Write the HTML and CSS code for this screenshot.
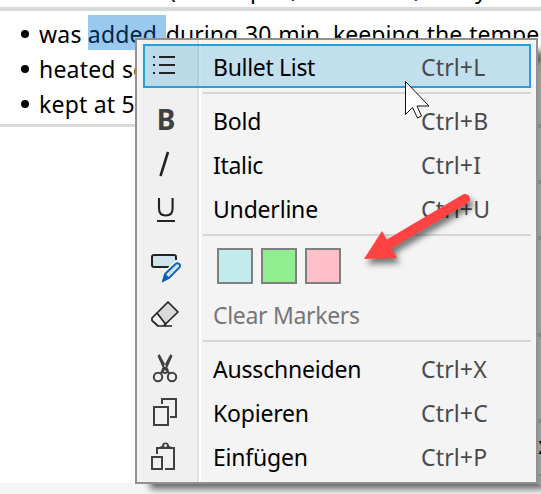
FILE: index.html
```html
<!DOCTYPE html>
<html lang="en">
<head>
<meta charset="utf-8">
<title>Editor context menu</title>
<link rel="stylesheet" href="styles.css">
</head>
<body>
<main class="document">
  <div class="previous"><div class="previous-line"><span>(</span><span>p</span><span>,</span><span>,</span><span>y</span></div></div>
  <ul class="cell">
    <li>was <mark>added </mark><span class="rest">during 30 min, keeping the tempe</span></li>
    <li>heated so</li>
    <li>kept at 5</li>
  </ul>
  <div class="page-strip"></div>
</main>
<nav class="menu">
  <div class="row active"><span class="icon"><svg viewBox="0 0 32 32"><path fill="#222" d="M4 6h2v2H4zM4 14h2v2H4zM4 22h2v2H4zM10 6h16v2H10zM10 14h16v2H10zM10 22h16v2H10z"/></svg></span><span class="label tight">Bullet List</span><kbd>Ctrl+L</kbd></div>
  <hr>
  <div class="row"><span class="icon bold">B</span><span class="label">Bold</span><kbd>Ctrl+B</kbd></div>
  <div class="row"><span class="icon"><svg viewBox="0 0 32 32"><path d="M19 3 11.500 27" fill="none" stroke="#222" stroke-width="2.6"/></svg></span><span class="label tight">Italic</span><kbd>Ctrl+I</kbd></div>
  <div class="row"><span class="icon"><svg viewBox="0 0 32 32"><path d="M10 5v10.500q0 7 6.800 7t6.800-7V5M8 28h18" fill="none" stroke="#222" stroke-width="2.100"/></svg></span><span class="label">Underline</span><kbd>Ctrl+U</kbd></div>
  <hr>
  <div class="row colors"><span class="icon"><svg viewBox="0 0 32 32"><path d="M20 17H5q-2 0-2-2V7q0-2 2-2h20q2 0 2 2v3" fill="#cfe3ea" stroke="#222" stroke-width="2"/><path d="m14 31 2-7L26.500 14q2-1.500 3.700 0t0 3.700L20 28z" fill="#cfe3ea" stroke="#f0f0f0" stroke-width="5"/><path d="m14 31 2-7L26.500 14q2-1.500 3.700 0t0 3.700L20 28z" fill="#cfe3ea" stroke="#0860bf" stroke-width="1.800"/><path d="m13.500 31.500 2.500-8 4.500 4.500z" fill="#0860bf"/></svg></span><span class="swatches"><i class="aqua"></i><i class="green"></i><i class="pink"></i></span></div>
  <div class="row disabled"><span class="icon"><svg viewBox="0 0 32 32"><g stroke="#222" stroke-width="1.700" stroke-linejoin="round"><path d="M8 14 19 3l10 10-12.500 12z" fill="#d9d9d9"/><path d="m8 14-5 5v2.500L9 27h5.500l2.500-2M9 27h14" fill="none"/></g></svg></span><span class="label tight">Clear Markers</span></div>
  <hr>
  <div class="row"><span class="icon"><svg viewBox="0 0 32 32"><g fill="none" stroke="#404040" stroke-width="2"><circle cx="9" cy="24" r="4.200"/><circle cx="23" cy="24" r="4.200"/><path d="m11.500 20.500 3-4h3l3 4"/><circle cx="16" cy="17.500" r="2.500"/></g><path d="m8.500 3 2-2 6.500 12-2.500 3.500zM23.500 3l-2-2L15 13l2.500 3.500z" fill="#404040"/></svg></span><span class="label">Ausschneiden</span><kbd>Ctrl+X</kbd></div>
  <div class="row"><span class="icon"><svg viewBox="0 0 32 32"><path d="M5 10h14v18H5zM13 7V2h14v18h-6" fill="none" stroke="#404040" stroke-width="2"/></svg></span><span class="label">Kopieren</span><kbd>Ctrl+C</kbd></div>
  <div class="row"><span class="icon"><svg viewBox="0 0 32 32"><path d="M3 16h10v12H3zM8 13V7h17v21h-9" fill="none" stroke="#404040" stroke-width="2"/><path d="M10 8V6l3-1a3.500 3.500 0 0 1 7 0l3 1v2z" fill="#404040"/><circle cx="16.500" cy="4.500" r="1.500" fill="#f0f0f0"/></svg></span><span class="label">Einfügen</span><kbd>Ctrl+P</kbd></div>
</nav>
<div class="table-edge">x</div>
<svg class="arrow" viewBox="0 0 130 90"><path d="M14 74 32 46l15 27z" fill="#ff4242"/><path d="M115 14 34 62" stroke="#ff4242" stroke-width="10" stroke-linecap="round"/></svg>
<svg class="cursor" viewBox="0 0 28 40"><path d="M1.500 1.500v33l7-7 5 10.500 4-2-4.500-10h12z" fill="#fff" stroke="#111"/></svg>
</body>
</html>
```
FILE: styles.css
```css
* { box-sizing: border-box; }
body { margin: 0; width: 541px; height: 494px; overflow: hidden; background: #fff; font-family: "Noto Sans", "Open Sans", sans-serif; font-size: 23px; color: #000; position: relative; }
.document { height: 494px; display: flex; flex-direction: column; overflow: hidden; }
.previous { height: 11px; border-bottom: 4px solid #d9d9d9; overflow: hidden; }
.previous-line { display: grid; grid-template-columns: 81px 41px 123px 61px 30px; margin: -28px 0 0 169px; line-height: 35px; }
.cell { list-style: none; margin: 0; padding: 4px 0 0 39px; height: 116px; border-bottom: 3px solid #d9d9d9; }
.cell li { height: 35px; line-height: 38px; white-space: pre; position: relative; letter-spacing: .2px; }
.cell li::before { content: ""; position: absolute; left: -18px; top: 15px; width: 8px; height: 8px; border-radius: 50%; background: #000; }
mark { display: inline-block; height: 35px; width: 78px; background: #99c9ef; color: #05264a; vertical-align: top; }
.rest { word-spacing: .9px; letter-spacing: .02px; }
.page-strip { margin-top: auto; height: 11px; background: #f5f5f5; }
.table-edge { position: absolute; right: 0; top: 60px; width: 3px; height: 425px; padding-top: 370px; line-height: 30px; overflow: hidden; background: linear-gradient(#9990, #999 6px 64px, #858585 64px 68px, #999 68px 120px, #858585 120px 124px, #999 124px 176px, #858585 176px 180px, #999 180px 273px, #858585 273px 277px, #999 277px 359px, #858585 359px 363px, #999 363px 414px, #858585 414px 416px, #999 416px); }
.menu { position: absolute; left: 135px; top: 38px; width: 403px; height: 446px; border: 2px solid #919191; padding: 4px 5px 0 6px; background: linear-gradient(90deg, #f4f4f4 4px, #f0f0f0 4px 60px, #dfdfdf 60px 62px, #fff 62px 64px, #f4f4f4 64px); box-shadow: 11px 9px 7px -4px #666; }
.row { display: flex; height: 44px; align-items: center; }
.active { background: linear-gradient(90deg, #bddae8 54px, #abcfdf 54px 56px, #c9e3ef 56px 58px, #c2dfed 58px); outline: 2px solid #26a0da; outline-offset: -2px; }
.active .label, .active kbd { padding-top: 2px; }
.icon { width: 32px; height: 32px; margin: 0 32px 0 6px; flex: none; }
.icon svg { display: block; width: 32px; height: 32px; overflow: visible; }
.bold { text-align: center; font-size: 28px; line-height: 29px; font-weight: 700; color: #404040; padding-left: 2px; }
.label { width: 208px; white-space: nowrap; letter-spacing: -.2px; }
.tight { letter-spacing: -.32px; }
.disabled { color: #777; }
kbd { font: inherit; color: #4a4a4a; white-space: nowrap; letter-spacing: .15px; }
hr { width: 328px; margin: 3px 0 5px 60px; border: 0; height: 2px; background: #d6d6d6; }
.active + hr { margin-top: 4px; }
.colors { height: 50px; margin-bottom: 2px; }
.swatches { display: flex; gap: 8px; margin-left: 4px; }
.swatches i { width: 36px; height: 36px; border: 2px solid #808080; }
.aqua { background: #c2ecec; }
.green { background: #90ee90; }
.pink { background: #ffc0cb; }
.arrow { position: absolute; left: 350px; top: 185px; width: 130px; height: 90px; filter: drop-shadow(3px 5px 3px #0008); }
.cursor { position: absolute; left: 404px; top: 80px; width: 28px; height: 40px; }
```
